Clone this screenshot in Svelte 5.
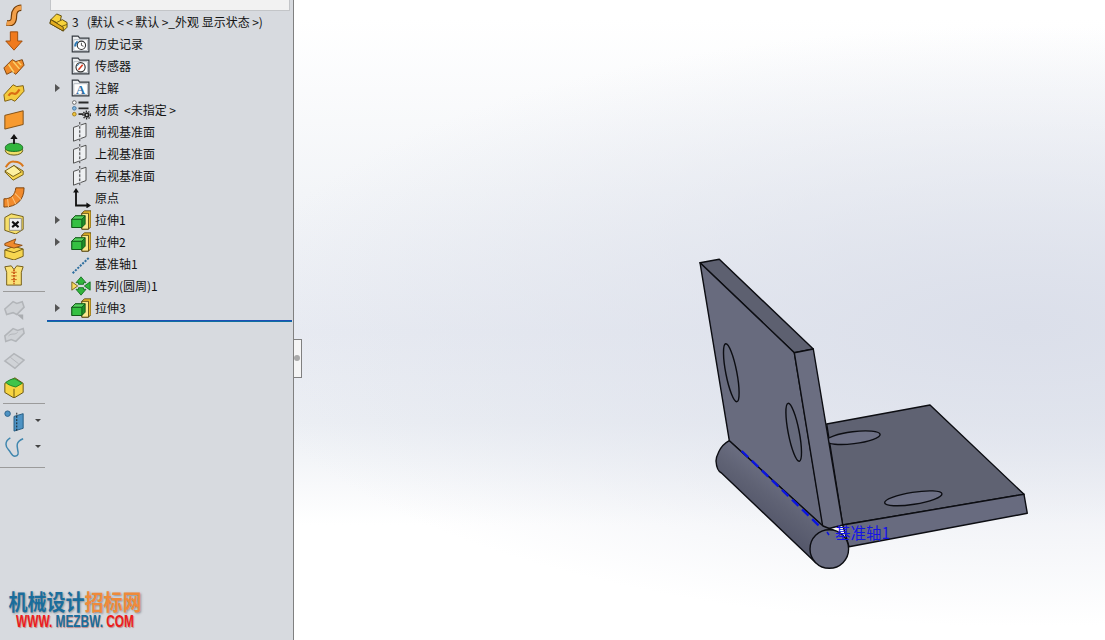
<script>
  const tree = [
    { icon: 'history', label: '历史记录' },
    { icon: 'sensor', label: '传感器' },
    { icon: 'note', label: '注解', arrow: true },
    { icon: 'material', label: '材质 \u2009<未指定\u2009>' },
    { icon: 'plane', label: '前视基准面' },
    { icon: 'plane', label: '上视基准面' },
    { icon: 'plane', label: '右视基准面' },
    { icon: 'origin', label: '原点' },
    { icon: 'extrude', label: '拉伸1', arrow: true },
    { icon: 'extrude', label: '拉伸2', arrow: true },
    { icon: 'axis', label: '基准轴1' },
    { icon: 'pattern', label: '阵列(圆周)1' },
    { icon: 'extrude', label: '拉伸3', arrow: true }
  ];
  const toolsA = ['sweep', 'arrow', 'ribs', 'wrap', 'sheet', 'boss', 'loft', 'elbow', 'xbox', 'open', 'zip'];
  const toolsB = ['grayA', 'grayB', 'grayC', 'cube'];
</script>

{#snippet icon(name)}
  <svg class="ico" viewBox="0 0 24 24" width="24" height="24" aria-hidden="true">
    {#if name === 'history' || name === 'sensor' || name === 'note'}
      <path d="M1.500 21.500V2.500h7l2 2.500h11v16.500z" fill="#eceef0" stroke="#33383f" stroke-width="1.400" />
      <rect x="3.500" y="7" width="16" height="13" fill="#fff" stroke="#8f98a2" stroke-width=".7" />
      {#if name === 'history'}
        <circle cx="12.500" cy="13.500" r="5" fill="#fff" stroke="#333" stroke-width="1.300" />
        <path d="M12.500 10.500v3.200l2.500 1" fill="none" stroke="#333" />
        <path d="M5 15a7 7 0 0 1 3-6" fill="none" stroke="#2c78b4" stroke-width="2.400" />
      {:else if name === 'sensor'}
        <circle cx="11.500" cy="13.500" r="5.500" fill="#fff" stroke="#333" stroke-width="1.400" />
        <path d="M9 16.500l5-6" stroke="#d83a20" stroke-width="1.800" />
        <path d="M7.500 12a4.500 4.500 0 0 1 2.500-2.500" stroke="#2c78b4" fill="none" />
      {:else}
        <text x="11.500" y="19" class="ann">A</text>
      {/if}
    {:else if name === 'material'}
      <circle cx="4" cy="3" r="2.200" fill="#fff" stroke="#555" />
      <path d="M9 3h12M9 10h12M9 17h6" stroke="#2b2b2b" stroke-width="2.200" />
      <circle cx="4" cy="10" r="2.200" fill="#7fb5dc" stroke="#3d6f9b" />
      <circle cx="4" cy="17" r="2.200" fill="#efc53c" stroke="#96741a" />
      <circle cx="19" cy="18" r="3.300" fill="#222" />
      <circle cx="19" cy="18" r="4.500" fill="none" stroke="#222" stroke-width="1.600" stroke-dasharray="1.600 1.600" />
      <circle cx="19" cy="18" r="1.200" fill="#d8dbe0" />
    {:else if name === 'plane'}
      <path d="M3 6.500l15-5v16l-15 5.500z" fill="#eef0f2" stroke="#444" stroke-width="1.100" />
      <path d="M10.500 0v24" stroke="#d7dadf" stroke-width="2" />
      <path d="M10.500 0v24" stroke="#333" stroke-width="1.100" stroke-dasharray="3 2" />
    {:else if name === 'origin'}
      <path d="M6 4v17h14" fill="none" stroke="#111" stroke-width="2.200" />
      <path d="M6 0l-3.500 5.500h7zM24 21l-5.500-3.500v7z" fill="#111" />
    {:else if name === 'extrude'}
      <path d="M13 4l3-3h8v19l-3 3h-8z" fill="#e9b92d" stroke="#4e3e0c" />
      <path d="M13 4h8v19h-8z" fill="#fbe98e" stroke="#4e3e0c" />
      <path d="M1 11l4-4h12v10l-4 4H1z" fill="#1d8f2a" stroke="#0e4f15" />
      <path d="M1 11h12v10H1z" fill="#35c042" stroke="#0e4f15" />
      <path d="M5 7h12l-4 4H1z" fill="#57d45f" stroke="#0e4f15" />
    {:else if name === 'axis'}
      <path d="M2 23L22 4" stroke="#2f6f9f" stroke-width="2.400" stroke-dasharray="2.500 1.500" />
    {:else if name === 'pattern'}
      <path d="M6 8l6-7 6 7h-3v2H9V8z" fill="#31b53d" stroke="#0f6b1b" />
      <path d="M6 16l6 7 6-7h-3v-2H9v2z" fill="#31b53d" stroke="#0f6b1b" />
      <path d="M1 7l7 5-7 5z" fill="#f7db60" stroke="#6a5510" />
      <path d="M23 7l-7 5 7 5z" fill="#31b53d" stroke="#0f6b1b" />
    {:else if name === 'sweep'}
      <path d="M4 21c6 1 8-2 8-8 0-5 3-9 8-9" fill="none" stroke="#6f3a06" stroke-width="7" />
      <path d="M4 21c6 1 8-2 8-8 0-5 3-9 8-9" fill="none" stroke="#f2a04a" stroke-width="4.500" />
    {:else if name === 'arrow'}
      <path d="M8 2h8v10h5l-9 10L3 12h5z" fill="#f07a1d" stroke="#9a4a0a" />
    {:else if name === 'ribs'}
      <path d="M1 13l9-9 4 2 7-2 2 6-9 10-4-3-6 3z" fill="#ef8a28" stroke="#7a3f08" />
      <path d="M6 9l6 9M11 6l7 8M16 6l4 4" stroke="#fbd36b" stroke-width="1.500" />
    {:else if name === 'wrap'}
      <path d="M1 14l10-11 4 2 7-1 1 6-10 11-4-2-7 2z" fill="#f4cb3e" stroke="#7a5a0c" />
      <path d="M6 15c3-5 5-2 7-2s3-2 5-5" fill="none" stroke="#d96c12" stroke-width="2.400" />
    {:else if name === 'sheet'}
      <path d="M2 8l20-5v15L2 23z" fill="#f79a2f" stroke="#7d4a0e" />
    {:else if name === 'boss'}
      <ellipse cx="12" cy="18" rx="9.500" ry="5" fill="#f1df68" stroke="#5c5410" />
      <path d="M2.500 15c0-3 4-5 9.500-5s9.500 2 9.500 5-4 4-9.500 4-9.500-1-9.500-4z" fill="#31b53d" stroke="#15661e" />
      <path d="M12 11V4" stroke="#111" stroke-width="2" />
      <path d="M12 0L8 5.500h8z" fill="#111" />
    {:else if name === 'loft'}
      <path d="M2 13l9 9 11-6v-4l-10-6z" fill="#f6d650" stroke="#6d5610" />
      <path d="M2 12l10-6 8 7-9 5z" fill="#fdf0a0" stroke="#6d5610" />
      <path d="M3 8c3-5 7-7 10-6 4 0 7 2 9 5" fill="none" stroke="#d9781c" stroke-width="2.200" />
    {:else if name === 'elbow'}
      <path d="M1 14c8 0 12-4 13-12h9c0 13-8 21-22 21z" fill="#f18a2c" stroke="#7a3f08" />
      <path d="M5 14l1 9M10 12l4 8M13 8l7 7" stroke="#fbc27a" stroke-width="1.100" />
    {:else if name === 'xbox'}
      <path d="M2 6l7-4 13 3v14l-8 5-12-4z" fill="#f6df6b" stroke="#6a5510" />
      <path d="M7 7h13v13H7z" fill="#efefef" stroke="#777" stroke-width=".8" />
      <path d="M10 10.500l7 6M17 10.500l-7 6" stroke="#111" stroke-width="2.200" />
    {:else if name === 'open'}
      <path d="M2 13l10-4 10 3v8l-10 4-10-3z" fill="#f6d650" stroke="#6d5610" />
      <path d="M2 13l10 3 10-4" fill="none" stroke="#6d5610" />
      <path d="M2 6l12-5-2 5 9 2-9 3-10-3z" fill="#f18a2c" stroke="#8a4a10" />
    {:else if name === 'zip'}
      <path d="M2 3l7-1 3 4 3-4 7 1-2 6v14H4V9z" fill="#f9e176" stroke="#6d5610" />
      <path d="M12 6v16" stroke="#c95c16" stroke-width="2" stroke-dasharray="2 1" />
      <path d="M9 9h6M9 13h6M9 17h6" stroke="#c95c16" />
    {:else if name === 'grayA'}
      <path d="M2 12l9-8 4 2 6-2 2 6-8 8-4-2-7 2z" fill="#cfd2d6" stroke="#b2b5b9" stroke-width="1.700" />
      <path d="M15 18h7v6z" fill="#a9acb0" />
    {:else if name === 'grayB'}
      <path d="M2 13l9-8 5 2 6-2 1 5-9 9-5-2-6 2z" fill="#cfd2d6" stroke="#b2b5b9" stroke-width="1.700" />
      <path d="M6 13c4-4 6 0 10-4" fill="none" stroke="#b2b5b9" />
    {:else if name === 'grayC'}
      <path d="M2 12l10-8 11 7-10 9z" fill="#d0d3d7" stroke="#b2b5b9" stroke-width="1.700" />
      <path d="M8 8l9 7" stroke="#b2b5b9" />
    {:else if name === 'cube'}
      <path d="M2 8l11-6 9 6v10l-10 6-10-6z" fill="#f7d442" stroke="#5f4d0c" />
      <path d="M3 7c3-2 6-4 10-4l8 5-7 4c-4-1-8-2-11-5z" fill="#40c44a" stroke="#1b7f25" />
      <path d="M12 14v10" stroke="#5f4d0c" />
    {:else if name === 'refplane'}
      <circle cx="5" cy="4" r="3" fill="#4e93c4" stroke="#2a5f88" />
      <path d="M12 7l10-3v16l-10 3z" fill="#4e93c4" stroke="#1f587f" />
      <path d="M15 3v21" stroke="#111" stroke-dasharray="2 1.500" />
    {:else if name === 'curve'}
      <path d="M8 2C1 6 3 12 6 15s3 7 7 7 4-3 3-7-2-9 6-12" fill="none" stroke="#3f86ae" stroke-width="1.600" />
    {/if}
  </svg>
{/snippet}

<div class="app">
  <aside class="sidebar">
    <nav class="tools">
      {#each toolsA as t}<div class="tool">{@render icon(t)}</div>{/each}
      <hr />
      {#each toolsB as t}<div class="tool">{@render icon(t)}</div>{/each}
      <hr />
      <div class="tool">{@render icon('refplane')}<i class="caret"></i></div>
      <div class="tool">{@render icon('curve')}<i class="caret"></i></div>
      <hr class="third" />
    </nav>

    <section class="tree">
      <div class="searchbar"></div>
      <div class="root">
        <svg viewBox="0 0 20 20" width="19" height="19" aria-hidden="true">
          <path d="M1 11l1-4 6-6 5 2-1 5 2-1 5 3v5l-4 4z" fill="#f7d23a" stroke="#5d4a0c" />
          <path d="M2 7l6 3 3 5M8 10l4-2M11 15l8-3" fill="none" stroke="#7a6010" />
          <path d="M1 11l14 8v-4L2 7z" fill="#e2ab1e" stroke="#5d4a0c" />
        </svg>
        <span class="label">3 &nbsp;&nbsp;(默认&thinsp;&lt;&thinsp;&lt;&thinsp;默认&thinsp;&gt;_外观 显示状态&thinsp;&gt;)</span>
      </div>
      {#each tree as row}
        <div class="row">
          <span class="twisty">{#if row.arrow}<i></i>{/if}</span>
          {@render icon(row.icon)}
          <span class="label">{row.label}</span>
        </div>
      {/each}
      <div class="rollback"></div>
    </section>

    <div class="watermark">
      <div class="cn"><span class="blue">机械设计</span><span class="orange">招标网</span></div>
      <div class="url"><span class="red">WWW.</span> <span class="blue">MEZBW.</span> <span class="red">COM</span></div>
    </div>
  </aside>

  <main class="view">
    <button class="handle" aria-label="collapse"><i></i></button>
    <svg class="part" viewBox="0 0 811 640" width="811" height="640" aria-hidden="true">
      <g transform="translate(-294 0)" stroke="#0c0d12" stroke-width="1.400" stroke-linejoin="round">
        <path d="M826.700 424L930 405L1024 494.300L842.700 525z" fill="#5f6272" />
        <path d="M842.700 525L1024 494.300L1027.300 513.300L849 546.700z" fill="#686b7f" />
        <ellipse cx="853.300" cy="437.700" rx="27" ry="6" transform="rotate(-7 853.300 437.700)" fill="#6d7085" />
        <ellipse cx="913.300" cy="498.300" rx="29" ry="6" transform="rotate(-9 913.300 498.300)" fill="#6d7085" />
        <path d="M700 262.700L719.300 259.300L813.300 349L794.300 352.700z" fill="#5d6070" />
        <path d="M700 262.700L794.300 352.700L823.300 526.700L729.300 440.700z" fill="#686b7e" />
        <path d="M794.300 352.700L813.300 349L842.700 525L823.300 530z" fill="#6b6e81" />
        <ellipse cx="731.300" cy="372.700" rx="5.500" ry="29.500" transform="rotate(-11 731.300 372.700)" fill="#666a7c" />
        <ellipse cx="793.700" cy="432.300" rx="5.500" ry="29.500" transform="rotate(-11 793.700 432.300)" fill="#666a7c" />
        <path d="M729.300 440.700C719 446 716 458 716 461C716.500 468 719 472 721.500 473L815.500 562.500L833 530L823 526z" fill="url(#cyl)" />
        <circle cx="829.300" cy="549" r="19.300" fill="#696c80" />
      </g>
      <g transform="translate(-294 0)">
        <path d="M741.700 451L820 526.700" stroke="#0a14e0" stroke-width="2.400" stroke-dasharray="9 5" />
        <path d="M827 532l2 3" stroke="#0a14e0" stroke-width="1.500" />
        <text x="835" y="539" class="axislabel">基准轴1</text>
      </g>
      <defs>
        <linearGradient id="cyl" gradientUnits="userSpaceOnUse" x1="780" y1="470" x2="750" y2="510">
          <stop offset="0" stop-color="#6f7286" />
          <stop offset=".55" stop-color="#5f6274" />
          <stop offset="1" stop-color="#54576a" />
        </linearGradient>
      </defs>
    </svg>
  </main>
</div>

<style>
  :global(body) {
    margin: 0;
    overflow: hidden;
  }
  .app {
    display: flex;
    width: 1105px;
    height: 640px;
    font-family: "Noto Sans CJK SC", "Liberation Sans", sans-serif;
    font-size: 12px;
    color: #141414;
  }
  .sidebar {
    position: relative;
    flex: 0 0 293px;
    display: flex;
    background: #d7dadf;
    border-right: 1px solid #808080;
  }
  .tools {
    flex: 0 0 47px;
    padding-top: 2px;
    box-sizing: border-box;
    display: flex;
    flex-direction: column;
  }
  .tool {
    position: relative;
    height: 26px;
    display: flex;
    align-items: center;
    padding-left: 2px;
  }
  .tool .ico {
    width: 22px;
    height: 22px;
    margin-left: 1px;
  }
  .caret {
    position: absolute;
    left: 35px;
    top: 11px;
    border: 3px solid transparent;
    border-top: 3px solid #444;
    border-bottom: 0;
  }
  hr {
    width: 42px;
    height: 1px;
    border: 0;
    background: #9b9b9b;
    margin: 3px 0 4px 3px;
    flex: none;
  }
  hr.third {
    margin: 7px 0 0;
    width: 45px;
  }
  .tree {
    flex: 1;
    min-width: 0;
  }
  .searchbar {
    height: 10px;
    margin: 0 3px;
    background: #f2f2f2;
    border: 1px solid #c3c5c8;
    border-top: 0;
  }
  .root {
    height: 22px;
    display: flex;
    align-items: center;
    gap: 4px;
    padding-left: 2px;
    white-space: nowrap;
  }
  .root .label {
    margin-left: 0;
  }
  .row {
    height: 22px;
    display: flex;
    align-items: center;
    white-space: nowrap;
  }
  .twisty {
    flex: 0 0 24px;
    display: flex;
    justify-content: center;
    padding-right: 4px;
    box-sizing: border-box;
    padding-left: 1px;
  }
  .twisty i {
    border-left: 5px solid #555;
    border-top: 4px solid transparent;
    border-bottom: 4px solid transparent;
  }
  .row .ico {
    width: 20px;
    height: 20px;
    flex: none;
  }
  .label {
    margin-left: 4px;
    margin-top: -2px;
  }
  .rollback {
    height: 2px;
    margin: 1px 1px 0 0;
    background: linear-gradient(#1c4fb5 50%, #0f6fa0 50%);
  }
  .ann {
    font-family: "Liberation Serif", serif;
    font-weight: 700;
    font-size: 15px;
    fill: #2a6ea8;
    text-anchor: middle;
  }
  .watermark {
    position: absolute;
    left: 7px;
    top: 589px;
    width: 136px;
    font-weight: 700;
    line-height: 1;
    text-align: center;
  }
  .cn {
    font-family: "Noto Sans CJK SC", serif;
    font-size: 19px;
    height: 25px;
    white-space: nowrap;
    text-shadow: 1px 1px 2px #8a8f96;
    transform: scaleY(1.15);
    transform-origin: top;
  }
  .url {
    width: 160px;
    margin-left: -12px;
    font-family: "Liberation Sans", sans-serif;
    font-size: 16px;
    white-space: nowrap;
    text-shadow: 1px 1px 1px #c08a8a;
    transform: scaleX(.74);
    transform-origin: center;
  }
  .blue { color: #1a6d9c; }
  .orange { color: #ef8a3a; }
  .red { color: #ec1c1c; }
  .view {
    position: relative;
    flex: 1;
    overflow: hidden;
    background:
      radial-gradient(ellipse 800px 300px at 90% 51%, #dbdfea 0, rgba(219, 223, 234, 0) 100%),
      linear-gradient(180deg, #fff 3%, #f3f5f8 30%, #e8ebf2 52%, #eceff4 66%, #fff 82%);
  }
  .part {
    display: block;
  }
  .handle {
    position: absolute;
    left: -1px;
    top: 339px;
    width: 9px;
    height: 39px;
    padding: 0;
    background: #f5f5f5;
    border: 1px solid #808080;
    border-left: 0;
  }
  .handle i {
    position: absolute;
    left: 1px;
    top: 15px;
    width: 6px;
    height: 6px;
    border-radius: 50%;
    background: #a9a9a9;
  }
  .axislabel {
    font-family: "Noto Sans CJK SC", sans-serif;
    font-size: 15.500px;
    fill: #1414e6;
  }
</style>
